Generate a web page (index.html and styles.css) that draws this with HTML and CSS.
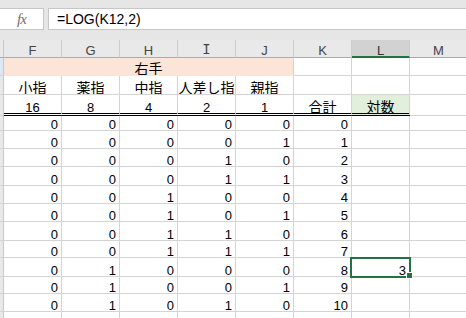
FILE: index.html
```
<!doctype html>
<html>
<head>
  <meta charset="utf-8">
  <link rel="stylesheet" href="styles.css">
</head>
<body>
  <div class="formula-bar">
    <div class="fx-box"><span class="fx">fx</span></div>
    <div class="formula">=LOG(K12,2)</div>
  </div>

  <div class="sheet" id="sheet">
    <div class="corner"></div>
    <div class="col-head">F</div>
    <div class="col-head">G</div>
    <div class="col-head">H</div>
    <div class="col-head letter-i">I</div>
    <div class="col-head">J</div>
    <div class="col-head">K</div>
    <div class="col-head current">L</div>
    <div class="col-head">M</div>

    <div class="row-head blue"></div>
    <div class="cell center jp peach">右手</div>
    <div class="cell"></div>
    <div class="cell"></div>
    <div class="cell"></div>

    <div class="row-head"></div>
    <div class="cell center jp">小指</div>
    <div class="cell center jp">薬指</div>
    <div class="cell center jp">中指</div>
    <div class="cell center jp">人差し指</div>
    <div class="cell center jp">親指</div>
    <div class="cell"></div>
    <div class="cell"></div>
    <div class="cell"></div>

    <div class="row-head"></div>
    <div class="cell center double">16</div>
    <div class="cell center double">8</div>
    <div class="cell center double">4</div>
    <div class="cell center double">2</div>
    <div class="cell center double">1</div>
    <div class="cell center jp double">合計</div>
    <div class="cell center jp double green">対数</div>
    <div class="cell"></div>
  </div>

  <script>
    var data = [
      [0,0,0,0,0,0],
      [0,0,0,0,1,1],
      [0,0,0,1,0,2],
      [0,0,0,1,1,3],
      [0,0,1,0,0,4],
      [0,0,1,0,1,5],
      [0,0,1,1,0,6],
      [0,0,1,1,1,7],
      [0,1,0,0,0,8],
      [0,1,0,0,1,9],
      [0,1,0,1,0,10]
    ];

    var markup = "";
    for(var i = 0; i < data.length; i++){
      markup += "<div class='row-head'></div>";
      for(var j = 0; j < data[i].length; j++){
        markup += "<div class='cell num'>" + data[i][j] + "</div>";
      }
      // L column holds the log only for the selected row
      if(data[i][5] == 8){
        markup += "<div class='cell num selected'>3</div>";
      }
      else{
        markup += "<div class='cell'></div>";
      }
      markup += "<div class='cell'></div>";
    }

    // partial row at the bottom edge
    markup += "<div class='row-head'></div>";
    for(var k = 0; k < 8; k++){
      markup += "<div class='cell'></div>";
    }

    document.getElementById("sheet").insertAdjacentHTML("beforeend", markup);
  </script>
</body>
</html>
```

FILE: styles.css
```
body{
  margin: 0;
  background-color: #e6e6e6;
  overflow: hidden;
}
.formula-bar{
  height: 40px;
  box-sizing: border-box;
  padding-top: 8px;
  display: flex;
  gap: 4px;
  align-items: flex-start;
}
.fx-box{
  width: 44px;
  height: 22px;
  box-sizing: border-box;
  background-color: #fff;
  border: 1px solid #c6c6c6;
  border-left: none;
  display: flex;
  justify-content: center;
  align-items: center;
}
.fx{
  font-family: "Liberation Serif", serif;
  font-style: italic;
  font-size: 15px;
  color: #707070;
  letter-spacing: -1px;
}
.formula{
  flex: 1;
  height: 22px;
  box-sizing: border-box;
  background-color: #fff;
  border: 1px solid #c6c6c6;
  border-right: none;
  padding-left: 8px;
  font-family: "Liberation Sans", sans-serif;
  font-size: 14px;
  line-height: 20px;
  color: #000;
}
.sheet{
  display: grid;
  grid-template-columns: 4px repeat(8, 58px);
  grid-template-rows: 18px 18px 19px 21px 15px 18px 18px 19px 18px 18px 19px 17px 19px 17px 18px 18px;
  background-color: #fff;
  font-family: "Liberation Sans", "Noto Sans CJK JP", sans-serif;
  font-size: 13px;
  color: #000;
}
.corner{
  background-color: #e9e9e9;
  border-right: 1px solid #c8c8c8;
  border-bottom: 1px solid #ababab;
}
.col-head{
  box-sizing: border-box;
  background-color: #e9e9e9;
  border-right: 1px solid #cdcdcd;
  border-bottom: 1px solid #ababab;
  display: flex;
  justify-content: center;
  align-items: flex-end;
  padding-bottom: 1px;
  line-height: 11px;
  color: #444;
}
.col-head.current{
  background-color: #d2d2d2;
  border-bottom: 2px solid #217346;
  padding-bottom: 0;
  color: #333;
}
.letter-i{
  font-family: "Liberation Mono", monospace;
  font-size: 14px;
}
.row-head{
  background-color: #e9e9e9;
  border-right: 1px solid #c8c8c8;
  border-bottom: 1px solid #d4d4d4;
}
.row-head.blue{
  background-color: #dbe8f6;
}
.cell{
  box-sizing: border-box;
  border-right: 1px solid #d4d4d4;
  border-bottom: 1px solid #d4d4d4;
  display: flex;
  align-items: flex-end;
  line-height: 11px;
  white-space: nowrap;
  overflow: hidden;
}
.num{
  justify-content: flex-end;
  padding-right: 3px;
}
.center{
  justify-content: center;
}
.jp{
  font-size: 14px;
}
.peach{
  grid-column: span 5;
  background-color: #fce4d6;
  border-bottom-color: #fce4d6;
}
.green{
  background-color: #e2efda;
}
.double{
  border-bottom: 3px double #000;
}
.selected{
  position: relative;
  overflow: visible;
}
.selected::after{
  content: "";
  position: absolute;
  left: -2px;
  right: -2px;
  top: -1px;
  bottom: -2px;
  border: 2px solid #217346;
}
.selected::before{
  content: "";
  position: absolute;
  width: 5px;
  height: 5px;
  right: -4px;
  bottom: -3px;
  background-color: #217346;
  border: 1px solid #fff;
  z-index: 2;
}
```
